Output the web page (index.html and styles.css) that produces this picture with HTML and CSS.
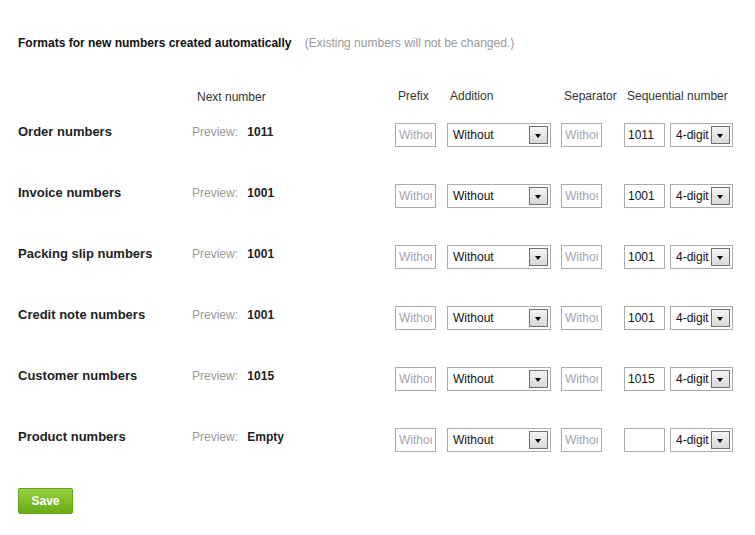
FILE: index.html
```html
<!DOCTYPE html>
<html>
<head>
<meta charset="utf-8">
<title>Number formats</title>
<link rel="stylesheet" href="styles.css">
</head>
<body>
<div class="page">

	<div class="title">
		<b>Formats for new numbers created automatically</b>
		<span class="note">(Existing numbers will not be changed.)</span>
	</div>

	<div class="row head">
		<div class="label"></div>
		<div class="preview">Next number</div>
		<div class="c-prefix">Prefix</div>
		<div class="c-add">Addition</div>
		<div class="c-sep">Separator</div>
		<div class="c-seq">Sequential number</div>
	</div>

	<!-- order -->
	<div class="row">
		<div class="label">Order numbers</div>
		<div class="preview">Preview: <b>1011</b></div>
		<input class="field c-prefix" placeholder="Without">
		<div class="select c-add"><span>Without</span><i class="arrow"></i></div>
		<input class="field c-sep" placeholder="Without">
		<input class="field seq" value="1011">
		<div class="select digits"><span>4-digit</span><i class="arrow"></i></div>
	</div>

	<!-- invoice -->
	<div class="row">
		<div class="label">Invoice numbers</div>
		<div class="preview">Preview: <b>1001</b></div>
		<input class="field c-prefix" placeholder="Without">
		<div class="select c-add"><span>Without</span><i class="arrow"></i></div>
		<input class="field c-sep" placeholder="Without">
		<input class="field seq" value="1001">
		<div class="select digits"><span>4-digit</span><i class="arrow"></i></div>
	</div>

	<!-- packing slip -->
	<div class="row">
		<div class="label">Packing slip numbers</div>
		<div class="preview">Preview: <b>1001</b></div>
		<input class="field c-prefix" placeholder="Without">
		<div class="select c-add"><span>Without</span><i class="arrow"></i></div>
		<input class="field c-sep" placeholder="Without">
		<input class="field seq" value="1001">
		<div class="select digits"><span>4-digit</span><i class="arrow"></i></div>
	</div>

	<!-- credit note -->
	<div class="row">
		<div class="label">Credit note numbers</div>
		<div class="preview">Preview: <b>1001</b></div>
		<input class="field c-prefix" placeholder="Without">
		<div class="select c-add"><span>Without</span><i class="arrow"></i></div>
		<input class="field c-sep" placeholder="Without">
		<input class="field seq" value="1001">
		<div class="select digits"><span>4-digit</span><i class="arrow"></i></div>
	</div>

	<!-- customer -->
	<div class="row">
		<div class="label">Customer numbers</div>
		<div class="preview">Preview: <b>1015</b></div>
		<input class="field c-prefix" placeholder="Without">
		<div class="select c-add"><span>Without</span><i class="arrow"></i></div>
		<input class="field c-sep" placeholder="Without">
		<input class="field seq" value="1015">
		<div class="select digits"><span>4-digit</span><i class="arrow"></i></div>
	</div>

	<!-- product -->
	<div class="row">
		<div class="label">Product numbers</div>
		<div class="preview">Preview: <b>Empty</b></div>
		<input class="field c-prefix" placeholder="Without">
		<div class="select c-add"><span>Without</span><i class="arrow"></i></div>
		<input class="field c-sep" placeholder="Without">
		<input class="field seq" value="">
		<div class="select digits"><span>4-digit</span><i class="arrow"></i></div>
	</div>

	<button class="save">Save</button>
</div>
</body>
</html>
```

FILE: styles.css
```css
* {
font-family: "Liberation Sans", Arial, sans-serif;
box-sizing: border-box;
}
body {
margin: 0;
background: #fff;
color: #222;
}
.page {
padding: 36px 0 0 18px;
}
.title {
font-size: 12px;
line-height: 15px;
color: #111;
margin-bottom: 38px;
}
.title .note {
color: #999;
margin-left: 10px;
}

.row {
display: flex;
align-items: flex-start;
height: 24px;
margin-bottom: 37px;
}
.row.head {
height: 15px;
margin-bottom: 19px;
font-size: 12px;
line-height: 15px;
color: #333;
}
.row.head > div { padding-left: 3px; padding-top: 0; }
.row.head .preview { padding-left: 5px; color: #333; }

.label {
width: 174px;
padding-top: 1px;
font-size: 13px;
font-weight: bold;
line-height: 16px;
color: #222;
}
.preview {
width: 203px;
padding-top: 1px;
font-size: 12px;
line-height: 16px;
color: #999;
}
.preview b {
color: #222;
margin-left: 6px;
}

.c-prefix { width: 41px; margin-right: 11px; }
.c-add { width: 104px; margin-right: 10px; }
.c-sep { width: 41px; margin-right: 22px; }
.row.head .c-sep { width: 63px; margin-right: 0; }
.c-seq { width: 120px; }
.seq { width: 41px; margin-right: 5px; }
.digits { width: 63px; }

.field {
height: 24px;
border: 1px solid #ababab;
padding: 0 3px;
font-size: 12px;
color: #111;
background: #fff;
outline: none;
}
.field::placeholder {
color: #a3a3b0;
}

.select {
height: 24px;
border: 1px solid #ababab;
display: flex;
align-items: center;
justify-content: space-between;
padding: 0 2px 0 5px;
font-size: 12px;
color: #111;
background: #fff;
}
.arrow {
width: 19px;
height: 18px;
border: 1px solid #707070;
background: linear-gradient(#f4f4f4, #d8d8d8);
position: relative;
}
.arrow::after {
content: "";
position: absolute;
left: 5px;
top: 7px;
border-left: 3.5px solid transparent;
border-right: 3.5px solid transparent;
border-top: 4px solid #000;
}

.save {
margin-top: -1px;
width: 55px;
height: 26px;
border: 1px solid #6aa313;
border-radius: 2px;
background: linear-gradient(#94d03f, #6aab16);
color: #fff;
font-size: 12px;
font-weight: bold;
padding: 0;
}
```
